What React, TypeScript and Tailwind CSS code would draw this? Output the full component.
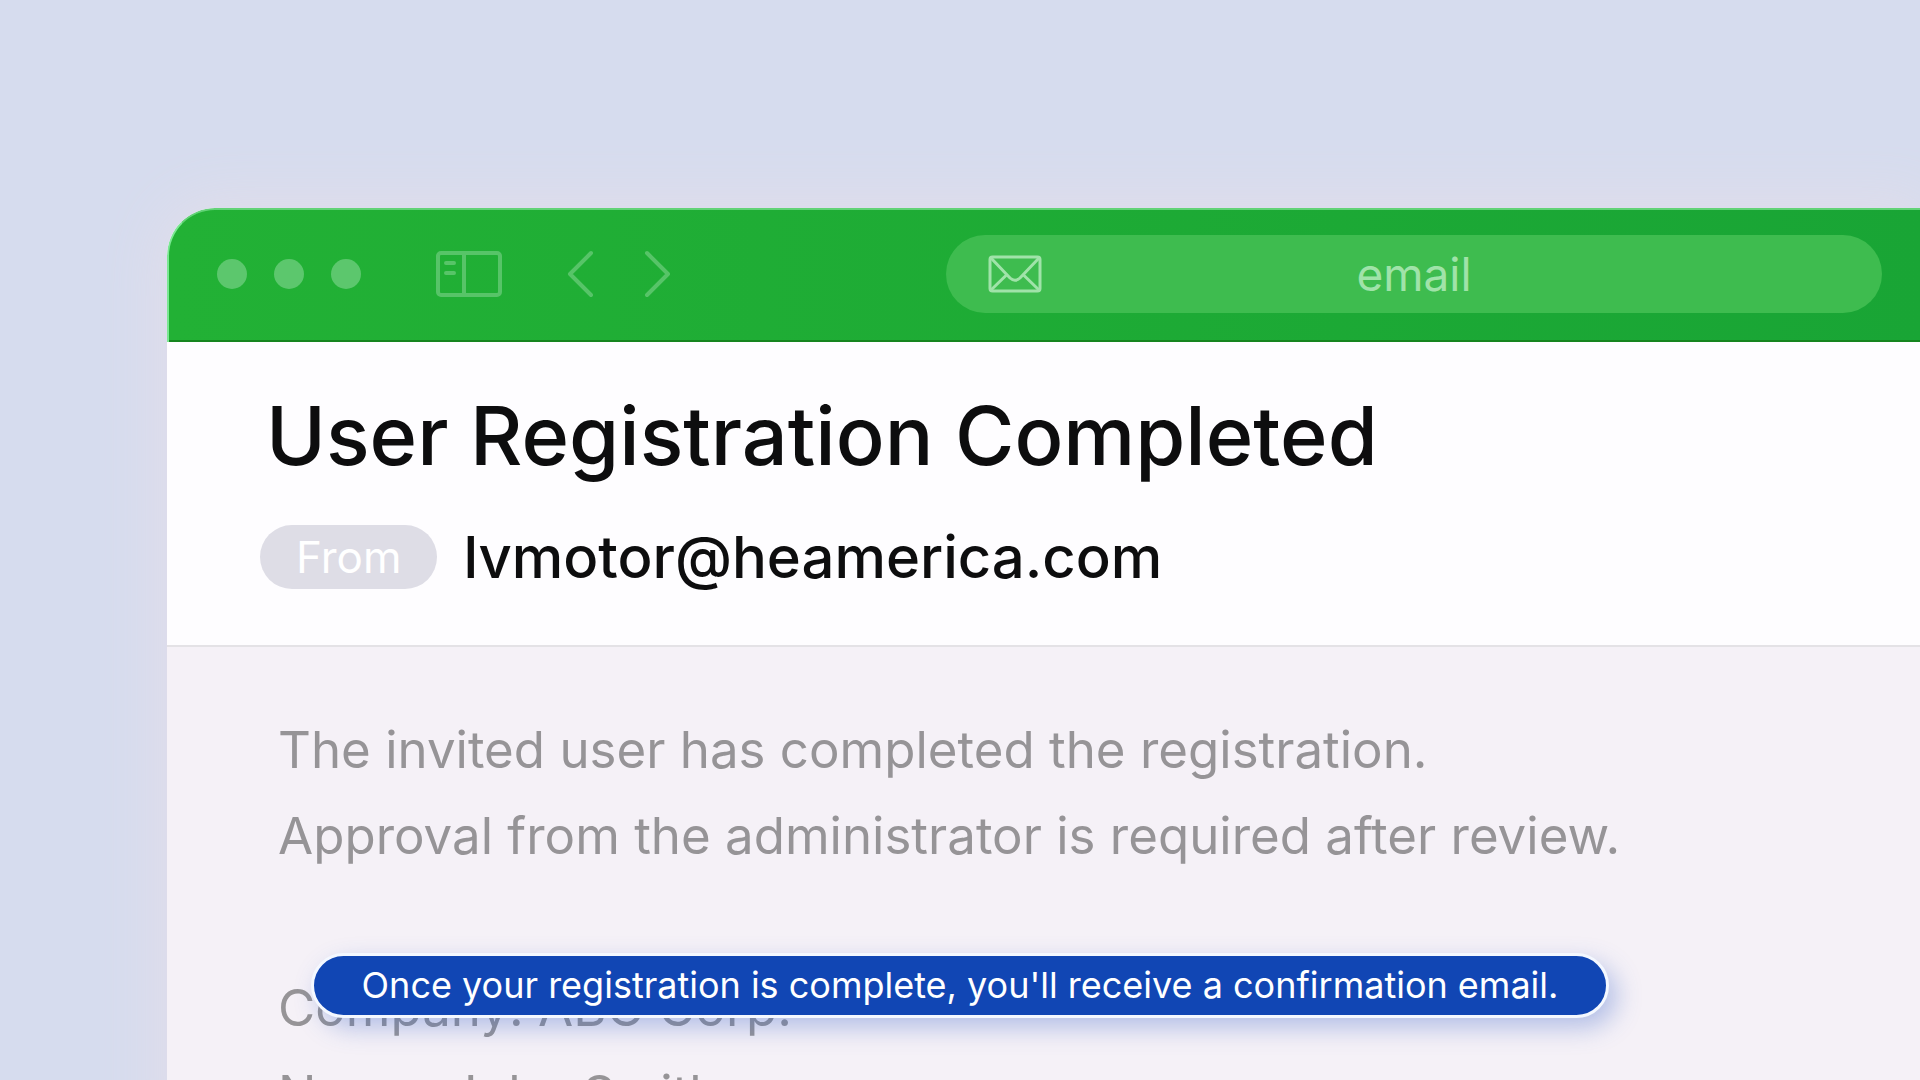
import type { ReactNode } from "react";

interface IconButtonProps {
  label: string;
  children: ReactNode;
}

const bodyLines = [
  "The invited user has completed the registration.",
  "Approval from the administrator is required after review.",
  "",
  "Company: ABC Corp.",
  "Name: John Smith",
];

function IconButton({ label, children }: IconButtonProps) {
  return (
    <button type="button" aria-label={label} className="shrink-0 cursor-pointer text-[#57c468]">
      {children}
    </button>
  );
}

function SidebarIcon() {
  return (
    <svg width="68" height="48" viewBox="0 0 68 48" fill="none" stroke="currentColor" strokeWidth="4">
      <rect x="3" y="3" width="62" height="42" rx="3" />
      <path d="M29 3v42" />
      <path d="M11 13h8M11 23h8" strokeLinecap="round" />
    </svg>
  );
}

function ChevronIcon({ d }: { d: string }) {
  return (
    <svg
      width="28"
      height="48"
      viewBox="0 0 28 48"
      fill="none"
      stroke="currentColor"
      strokeWidth="4"
      strokeLinecap="round"
      strokeLinejoin="round"
    >
      <path d={d} />
    </svg>
  );
}

function EnvelopeIcon() {
  return (
    <svg
      width="54"
      height="38"
      viewBox="0 0 54 38"
      fill="none"
      stroke="currentColor"
      strokeWidth="3"
      className="shrink-0"
    >
      <rect x="2" y="2" width="50" height="34" rx="2.500" />
      <path d="M3 3l19 20q5 4.500 10 0l19-20" />
      <path d="M3 35l16-15.500M51 35L35 19.500" />
    </svg>
  );
}

function Toolbar() {
  return (
    <div className="flex h-[134px] items-center rounded-tl-[48px] border-t-2 border-l-2 border-t-[#62d377] border-l-[#7be893] bg-gradient-to-r from-[#22b135] to-[#19a535] pr-[38px] pb-[4px] pl-[48px] shadow-[inset_0_-2px_0_#16851f]">
      <div className="flex gap-[27px]">
        <span className="size-[30px] rounded-full bg-[#5cc76d]" />
        <span className="size-[30px] rounded-full bg-[#5cc76d]" />
        <span className="size-[30px] rounded-full bg-[#5cc76d]" />
      </div>

      <div className="ml-[74px] flex items-center">
        <IconButton label="Toggle sidebar">
          <SidebarIcon />
        </IconButton>
      </div>

      <div className="ml-[63px] flex items-center gap-[50px]">
        <IconButton label="Back">
          <ChevronIcon d="M25 3L4 24l21 21" />
        </IconButton>
        <IconButton label="Forward">
          <ChevronIcon d="M3 3l21 21L3 45" />
        </IconButton>
      </div>

      {/* Address bar */}
      <div className="ml-[274px] flex h-[78px] flex-1 items-center rounded-full bg-[#3ebc4f] px-[42px] text-[#a0e3a9]">
        <EnvelopeIcon />
        <input
          type="text"
          aria-label="Address"
          defaultValue="email"
          className="mr-[54px] min-w-0 flex-1 bg-transparent text-center text-[46px] leading-[60px] outline-none"
        />
      </div>
    </div>
  );
}

export default function App() {
  return (
    <div className="relative h-screen overflow-hidden bg-[#d6dcee] pt-[208px] pl-[167px] font-['Inter','Liberation_Sans',sans-serif]">
      <main className="min-h-full overflow-hidden rounded-tl-[48px] bg-[#f5f1f7] shadow-[0_0_60px_8px_#e1ddea]">
        <Toolbar />

        <header className="border-b-2 border-[#e4e2e6] bg-[#fefdff] pt-[44px] pb-[56px] pl-[93px]">
          <h1 className="pl-[6px] text-[81px] leading-[100px] font-medium text-[#0d0d0e]">
            User Registration Completed
          </h1>
          <div className="mt-[39px] flex items-center gap-[26px]">
            <span className="rounded-full bg-[#dedde6] px-[36px] text-[44px] leading-[64px] text-white">From</span>
            <span className="text-[58px] leading-[64px] font-medium text-[#0d0d0e]">lvmotor@heamerica.com</span>
          </div>
        </header>

        <section className="pt-[60px] pl-[111px] text-[51px] leading-[86px] text-[#969497]">
          {bodyLines.map((line, i) => (
            <p key={i} className="min-h-[86px]">
              {line}
            </p>
          ))}
        </section>
      </main>

      {/* Caption laid over the page */}
      <div className="absolute inset-x-0 bottom-[62px] flex justify-center">
        <p className="rounded-full border-3 border-[#f4f8ff] bg-[#1146b4] px-[48px] text-[36px] leading-[59px] text-white shadow-[8px_10px_24px_rgba(60,100,200,0.35)]">
          Once your registration is complete, you'll receive a confirmation email.
        </p>
      </div>
    </div>
  );
}
